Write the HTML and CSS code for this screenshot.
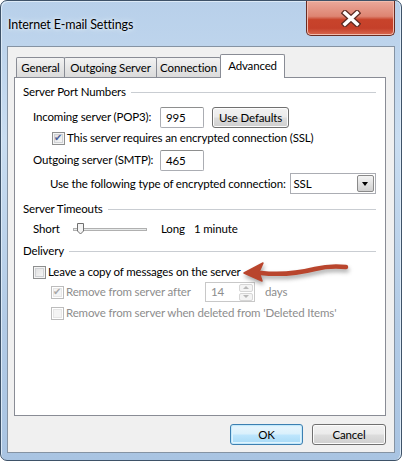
FILE: index.html
```html
<!DOCTYPE html>
<html lang="en">
<head>
    <meta charset="UTF-8">
    <title>Internet E-mail Settings</title>
    <link rel="stylesheet" href="styles.css">
</head>
<body>
<div class="window">
    <div class="titlebar">
        <div class="title">Internet E-mail Settings</div>
        <div class="close-btn">
            <svg width="20" height="17" viewBox="0 0 20 17">
                <path d="M4 3 L16 14 M16 3 L4 14" stroke="#5b2a22" stroke-width="6" stroke-linecap="square"/>
                <path d="M4 3 L16 14 M16 3 L4 14" stroke="#fff" stroke-width="3.6" stroke-linecap="square"/>
            </svg>
        </div>
    </div>

    <div class="client">
        <div class="tabs">
            <div class="tab tab-general">General</div>
            <div class="tab tab-outgoing">Outgoing Server</div>
            <div class="tab tab-connection">Connection</div>
            <div class="tab tab-advanced active">Advanced</div>
        </div>

        <div class="panel">
            <div class="group-head g-ports"><span>Server Port Numbers</span><i></i></div>

            <div class="row r-incoming">
                <label class="field-label">Incoming server (POP3):</label>
                <div class="textbox port">995</div>
                <button class="btn btn-defaults">Use Defaults</button>
            </div>

            <div class="row r-ssl">
                <span class="check checked"></span>
                <span>This server requires an encrypted connection (SSL)</span>
            </div>

            <div class="row r-outgoing">
                <label class="field-label">Outgoing server (SMTP):</label>
                <div class="textbox port">465</div>
            </div>

            <div class="row r-enc">
                <label class="enc-label">Use the following type of encrypted connection:</label>
                <div class="combo">
                    <span>SSL</span>
                    <span class="combo-arrow"></span>
                </div>
            </div>

            <div class="group-head g-timeouts"><span>Server Timeouts</span><i></i></div>

            <div class="row r-timeout">
                <span class="t-short">Short</span>
                <span class="slider">
                    <svg width="74" height="14" viewBox="0 0 74 14">
                        <rect x="0.5" y="6.5" width="73" height="2" fill="#e7eaea" stroke="#b0b0b0" stroke-width="1"/>
                        <path d="M4.5 1.5 H10.5 V9 L7.5 12 L4.5 9 Z" fill="#f4f4f4" stroke="#707070"/>
                    </svg>
                </span>
                <span class="t-long">Long</span>
                <span class="t-value">1 minute</span>
            </div>

            <div class="group-head g-delivery"><span>Delivery</span><i></i></div>

            <div class="row r-leave">
                <span class="check"></span>
                <span>Leave a copy of messages on the server</span>
            </div>

            <div class="row r-remove disabled">
                <span class="check checked"></span>
                <span class="remove-label">Remove from server after</span>
                <div class="spinner">
                    <span>14</span>
                    <span class="spin-btns">
                        <span class="spin up"></span>
                        <span class="spin down"></span>
                    </span>
                </div>
                <span class="days">days</span>
            </div>

            <div class="row r-deleted disabled">
                <span class="check"></span>
                <span>Remove from server when deleted from 'Deleted Items'</span>
            </div>
        </div>

        <div class="footer">
            <button class="btn btn-ok">OK</button>
            <button class="btn btn-cancel">Cancel</button>
        </div>
    </div>

    <svg class="arrow" width="120" height="34" viewBox="0 0 120 34">
        <path d="M22 16 C40 18, 60 16, 76 12 C88 9, 98 9, 107 10" fill="none" stroke="#b9452d" stroke-width="4.5" stroke-linecap="round"/>
        <path d="M5 16 L24 6 L20 15 L23 24 Z" fill="#b9452d" stroke="#b9452d" stroke-width="1.5" stroke-linejoin="round"/>
    </svg>
</div>
</body>
</html>
```

FILE: styles.css
```css
body { margin: 0; font-family: Lato, "Liberation Sans", sans-serif; font-size: 11.5px; letter-spacing: -0.15px; color: #000; }

.window { position: relative; width: 402px; height: 461px; box-sizing: border-box; border: 1px solid #3e5268; border-radius: 7px; padding: 0 6px 7px 6px; background: linear-gradient(to bottom, #b8d0ea 0%, #c9ddf1 30%, #b2cbe6 70%, #a9c4e2 100%); box-shadow: inset 1px 1px 0 #dceaf7, inset -1px 0 0 #dceaf7; }
.titlebar { height: 45px; display: flex; justify-content: space-between; align-items: flex-start; }
.title { margin-top: 16px; padding-left: 1px; font-size: 12.5px; line-height: 16px; color: #000; text-shadow: 0 0 6px #e6f0fa, 0 0 3px #f0f6fc; }
.close-btn { width: 89px; height: 35px; box-sizing: border-box; border: 1px solid #6a2c22; border-top: none; border-radius: 0 0 5px 5px; background: linear-gradient(to bottom, #eaa99b 0%, #de8472 45%, #c8432b 55%, #c5402a 80%, #d8684f 100%); box-shadow: inset 0 0 0 1px #f2bcae; display: flex; align-items: center; justify-content: center; }
.close-btn svg { display: block; }

.client { height: 407px; box-sizing: border-box; border: 1px solid #8593a3; background: #f0f0f0; padding: 7px 8px 0 6px; display: flex; flex-direction: column; }

.tabs { display: flex; align-items: flex-end; height: 24px; margin-bottom: -1px; padding-left: 2px; }
.tab { height: 20px; box-sizing: border-box; border: 1px solid #898c95; border-bottom: none; border-radius: 2px 2px 0 0; margin-bottom: 1px; margin-left: -1px; background: linear-gradient(to bottom, #f3f3f3, #e6e6e6 50%, #dbdbdb); line-height: 19px; text-align: center; white-space: nowrap; }
.tab-general { width: 49px; margin-left: 0; }
.tab-outgoing { width: 93px; }
.tab-connection { width: 65px; }
.tab-advanced { width: 65px; }
.tab.active { position: relative; z-index: 1; height: 24px; margin-bottom: 0; background: #fff; line-height: 21px; }

.panel { height: 339px; box-sizing: border-box; border: 1px solid #898c95; background: #fff; padding: 0 9px 0 8px; }

.group-head { display: flex; align-items: center; height: 16px; line-height: 16px; }
.group-head i { flex: 1; height: 0; border-top: 1px solid #c9cdd2; margin-left: 5px; margin-top: 1px; }
.g-ports { margin-top: 6px; }
.g-timeouts { margin-top: 7px; }
.g-delivery { margin-top: 6px; }

.row { display: flex; align-items: center; height: 16px; line-height: 16px; white-space: nowrap; }
.r-incoming { margin-top: 6px; height: 22px; padding-left: 10px; }
.r-ssl { margin-top: 2px; padding-left: 29px; }
.r-outgoing { margin-top: 3px; height: 22px; padding-left: 10px; }
.r-enc { margin-top: 2px; height: 21px; padding-left: 27px; }
.r-timeout { margin-top: 4px; padding-left: 10px; }
.r-leave { margin-top: 5px; padding-left: 10px; }
.r-remove { margin-top: 2px; height: 20px; padding-left: 28px; }
.r-deleted { margin-top: 3px; padding-left: 28px; }

.field-label { width: 127px; }
.enc-label { width: 241px; }

.textbox { height: 21px; box-sizing: border-box; border: 1px solid #abadb3; border-top-color: #8e8f8f; border-radius: 2px; background: #fff; padding: 0 5px; line-height: 19px; }
.port { width: 44px; }

.btn { font-family: inherit; font-size: 11.5px; letter-spacing: -0.15px; color: #000; height: 21px; padding: 0; box-sizing: border-box; border: 1px solid #707070; border-radius: 3px; background: linear-gradient(to bottom, #f2f2f2 0%, #ebebeb 48%, #dddddd 52%, #cfcfcf 100%); box-shadow: inset 0 0 0 1px #fcfcfc; }
.btn-defaults { width: 77px; margin-left: 8px; }

.check { width: 13px; height: 13px; box-sizing: border-box; border: 1px solid #8e8f8f; background: linear-gradient(135deg, #dcdcdc, #fbfbfb); box-shadow: inset 0 0 0 1px #f4f4f4, inset 0 0 0 2px #cfd1d4; margin-right: 2px; position: relative; flex: none; }
.check.checked::after { content: "\2714"; position: absolute; left: 1px; top: -3px; font-family: "DejaVu Sans", sans-serif; font-size: 10px; line-height: 16px; color: #4a5f97; }

.combo { width: 87px; height: 21px; box-sizing: border-box; border: 1px solid #abadb3; background: #fff; display: flex; align-items: center; justify-content: space-between; padding: 0 1px 0 3px; }
.combo-arrow { width: 17px; height: 17px; box-sizing: border-box; border: 1px solid #8a8a8a; border-radius: 2px; background: linear-gradient(to bottom, #f4f4f4, #e2e2e2 50%, #d0d0d0); position: relative; }
.combo-arrow::after { content: ""; position: absolute; left: 4px; top: 6px; border-left: 3.5px solid transparent; border-right: 3.5px solid transparent; border-top: 4px solid #000; }

.t-short { width: 40px; }
.slider { width: 74px; height: 14px; }
.slider svg { display: block; }
.t-long { margin-left: 14px; width: 33px; }

.disabled { color: #8d8d8d; }
.disabled .check { border-color: #bcbcbc; background: #f4f4f4; box-shadow: inset 0 0 0 1px #fff, inset 0 0 0 2px #e6e6e6; }
.disabled .check.checked::after { color: #a8a8a8; }

.remove-label { width: 139px; }
.spinner { width: 50px; height: 20px; box-sizing: border-box; border: 1px solid #c8c8c8; background: #fff; display: flex; align-items: center; justify-content: space-between; padding: 0 1px 0 5px; }
.spin-btns { display: flex; flex-direction: column; gap: 1px; }
.spin { width: 14px; height: 8px; box-sizing: border-box; border: 1px solid #d6d6d6; border-radius: 2px; background: #f4f4f4; position: relative; }
.spin::after { content: ""; position: absolute; left: 3px; border-left: 3px solid transparent; border-right: 3px solid transparent; }
.spin.up::after { top: 1px; border-bottom: 3px solid #b8b8b8; }
.spin.down::after { top: 1px; border-top: 3px solid #b8b8b8; }
.days { margin-left: 10px; }

.footer { display: flex; justify-content: flex-end; gap: 9px; margin-top: 8px; }
.btn-ok { width: 73px; border-color: #3c7fb1; background: linear-gradient(to bottom, #eaf6fd 0%, #d9f0fc 48%, #bee6fd 52%, #a7d9f5 100%); box-shadow: inset 0 0 0 1px #c4e9fb, inset 0 0 0 2px #dff3fd; }
.btn-cancel { width: 74px; }

.arrow { position: absolute; left: 238px; top: 256px; filter: drop-shadow(1px 3px 2px rgba(60, 60, 60, 0.45)); }
```
